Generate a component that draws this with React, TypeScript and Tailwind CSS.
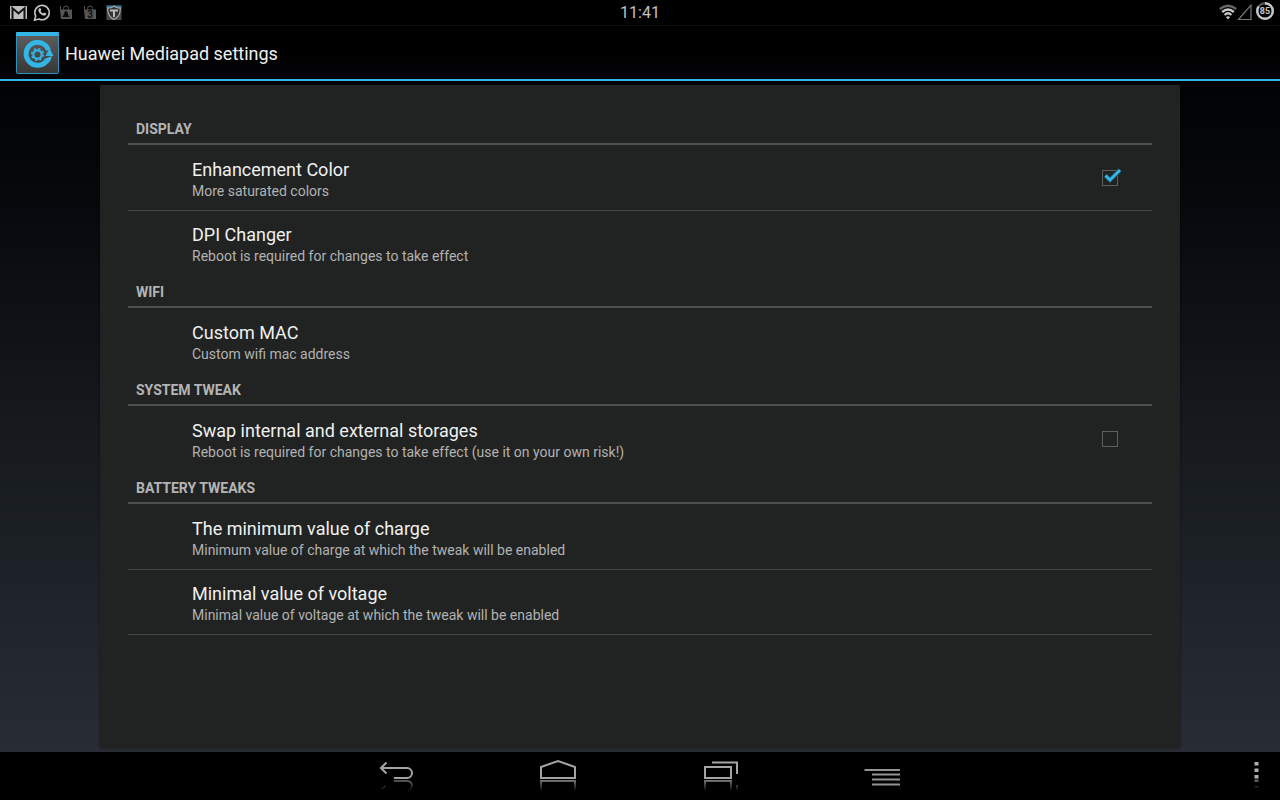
import { useState } from "react";

type Item = {
  title: string;
  summary: string;
  toggle?: "color" | "storage";
};

const sections: { name: string; items: Item[] }[] = [
  {
    name: "DISPLAY",
    items: [
      { title: "Enhancement Color", summary: "More saturated colors", toggle: "color" },
      { title: "DPI Changer", summary: "Reboot is required for changes to take effect" },
    ],
  },
  {
    name: "WIFI",
    items: [{ title: "Custom MAC", summary: "Custom wifi mac address" }],
  },
  {
    name: "SYSTEM TWEAK",
    items: [
      {
        title: "Swap internal and external storages",
        summary: "Reboot is required for changes to take effect (use it on your own risk!)",
        toggle: "storage",
      },
    ],
  },
  {
    name: "BATTERY TWEAKS",
    items: [
      {
        title: "The minimum value of charge",
        summary: "Minimum value of charge at which the tweak will be enabled",
      },
      {
        title: "Minimal value of voltage",
        summary: "Minimal value of voltage at which the tweak will be enabled",
      },
    ],
  },
];

function StatusBar() {
  return (
    <div className="grid h-[25px] grid-cols-3 items-center bg-black">
      <div className="flex items-center pb-[2px] pl-[6px]">
        {/* gmail */}
        <svg className="h-6 w-6" viewBox="0 0 24 24">
          <rect x="4" y="6" width="17" height="13" fill="#bdbdbd" />
          <path d="M6.500 19V8l6 5.500L18.500 8v11" fill="none" stroke="#111" strokeWidth="2" />
          <path d="M6 6.500h13l-6.500 5z" fill="#bdbdbd" />
        </svg>
        {/* whatsapp */}
        <svg className="h-6 w-6" viewBox="0 0 24 24">
          <path d="M4.500 20.200l1.200-4.200A7.200 7.200 0 1 1 8.800 19z" fill="none" stroke="#c4c4c4" strokeWidth="1.600" />
          <path d="M9 8.500c.8-.9 1.400-.7 1.700 0l.6 1.400-.8 1.100c.6 1.200 1.500 2 2.700 2.500l1-1.100 2 1c.2 1.200-.9 2.200-2.100 2.200-2.800 0-6-3.300-5.700-5.800z" fill="#c4c4c4" />
        </svg>
        {/* store updates */}
        <svg className="h-6 w-6" viewBox="0 0 24 24">
          <path d="M6.500 10V6M9.500 9.500V8.500a2.500 2.500 0 0 1 5 0v1" fill="none" stroke="#555" />
          <path d="M6 9.500h12V19H7z" fill="#565656" />
          <path d="M8 17c2-1 2-6 4-6s2 5 4 6z" fill="#0c0c0c" />
        </svg>
        <svg className="h-6 w-6" viewBox="0 0 24 24">
          <path d="M6.500 10V6M9.500 9.500V8.500a2.500 2.500 0 0 1 5 0v1" fill="none" stroke="#555" />
          <path d="M6 9.500h12V19H7z" fill="#565656" />
          <text x="12" y="18" textAnchor="middle" fontSize="10" fontWeight="700" fill="#0c0c0c">3</text>
        </svg>
        {/* titanium shield */}
        <svg className="h-6 w-6" viewBox="0 0 24 24">
          <rect x="4.500" y="5.500" width="15" height="14.500" fill="#434b50" />
          <rect x="4.500" y="5.500" width="15" height="3" fill="#2f7895" />
          <path d="M5.700 8.200q3.500 0 6.300-2 2.800 2 6.300 2 .3 8-6.300 11.300Q5.400 16 5.700 8.200z" fill="#333" stroke="#aaa" strokeWidth="1.200" />
          <path d="M8 10.500h8M12 10.500v6.500" stroke="#bbb" strokeWidth="2" />
        </svg>
      </div>
      <time className="text-center text-base leading-6 text-[#c0c0c0]">11:41</time>
      <div className="flex items-center justify-end pr-[5px] pb-[2px]">
        <svg className="h-6 w-[18px]" viewBox="0 0 18 24">
          <g fill="none" strokeWidth="2.400">
            <path d="M.8 9Q9 2.500 17.200 9" stroke="#666" />
            <path d="M3.200 12Q9 7 14.800 12" stroke="#c8c8c8" />
            <path d="M5.600 15Q9 11.700 12.400 15" stroke="#c8c8c8" />
          </g>
          <path d="M7 17.200Q9 15.200 11 17.200L9 19.500z" fill="#c8c8c8" />
        </svg>
        <svg className="h-6 w-[18px]" viewBox="0 0 18 24">
          <path d="M1.500 19.500H14V5z" fill="none" stroke="#777" strokeWidth="1.200" />
        </svg>
        <svg className="h-6 w-5" viewBox="0 0 20 24">
          <circle cx="10" cy="11" r="7.800" fill="none" stroke="#555" strokeWidth="2.400" />
          <circle
            cx="10"
            cy="11"
            r="7.800"
            fill="none"
            stroke="#c6c6c6"
            strokeWidth="2.400"
            pathLength="100"
            strokeDasharray="85 15"
            transform="rotate(-90 10 11)"
          />
          <text x="10" y="14" textAnchor="middle" fontSize="9" fontWeight="700" fill="#c6c6c6">85</text>
        </svg>
      </div>
    </div>
  );
}

function AppIcon() {
  return (
    <svg className="h-[42px] w-[43px]" viewBox="0 0 43 42">
      <defs>
        <linearGradient id="tile" x1="0" y1="0" x2="0" y2="1">
          <stop offset="0" stopColor="#606060" />
          <stop offset="1" stopColor="#363636" />
        </linearGradient>
      </defs>
      <rect x=".5" y=".5" width="42" height="41" rx="1" fill="url(#tile)" stroke="#2b93bd" />
      <rect width="43" height="4" rx="1" fill="#33b5e5" />
      {/* ring that ends in an arrow head */}
      <path d="M31 28.500A11.500 11.500 0 1 1 32.500 18" fill="none" stroke="#33b5e5" strokeWidth="5" />
      <path d="M28 27l4.500 4A14 14 0 0 0 36 24z" fill="#33b5e5" />
      <path d="M33.500 16l4 8h-8z" fill="#33b5e5" />
      <circle cx="21.500" cy="22.500" r="4.200" fill="none" stroke="#33b5e5" strokeWidth="2.200" />
      <circle cx="21.500" cy="22.500" r="5.800" fill="none" stroke="#33b5e5" strokeWidth="1.600" strokeDasharray="2.300 2.255" />
    </svg>
  );
}

function Row({ item, checked, onToggle }: { item: Item; checked: boolean; onToggle: () => void }) {
  const text = (
    <span className="flex flex-1 flex-col">
      <span className="text-lg leading-6 text-[#f0f0f0]">{item.title}</span>
      <span className="text-sm leading-[18px] text-[#b2b2b2]">{item.summary}</span>
    </span>
  );

  if (!item.toggle) {
    return (
      <button type="button" className="flex h-16 w-full items-start pt-3 pr-[34px] pl-16 text-left">
        {text}
      </button>
    );
  }

  return (
    <label className="flex h-16 w-full items-start pt-3 pr-[34px] pl-16">
      {text}
      <span className="relative mt-3 h-4 w-4">
        <input
          type="checkbox"
          checked={checked}
          onChange={onToggle}
          className="block h-4 w-4 appearance-none border border-[#5e5e60]"
        />
        {checked && (
          <svg className="pointer-events-none absolute -top-1 left-0 h-5 w-5" viewBox="0 0 20 20">
            <path d="M3.500 9.500l4.500 4.500L18 4" fill="none" stroke="#1f4454" strokeWidth="5" />
            <path d="M3.500 9.500l4.500 4.500L18 4" fill="none" stroke="#33b5e5" strokeWidth="3" />
          </svg>
        )}
      </span>
    </label>
  );
}

const navClass = "flex h-12 w-[162px] justify-center";

function NavBar() {
  return (
    <nav className="grid h-12 grid-cols-[1fr_auto_1fr] bg-black">
      <span />
      <div className="flex">
        <button type="button" aria-label="Back" className={navClass}>
          <svg className="h-12 w-10" viewBox="0 0 40 48">
            <defs>
              <linearGradient id="fade" x1="0" y1="28" x2="0" y2="39" gradientUnits="userSpaceOnUse">
                <stop offset="0" stopColor="#777" />
                <stop offset="1" stopColor="#000" />
              </linearGradient>
            </defs>
            <path d="M9.500 10.500L4 16l5.500 5.500M4 16h26a5 5 0 0 1 0 10H17" fill="none" stroke="#a4a4a4" strokeWidth="2" />
            <path d="M17 29h13q5 0 5 5.500-1 3-4 4M4 38l4.500-4" fill="none" stroke="url(#fade)" strokeWidth="1.500" />
          </svg>
        </button>
        <button type="button" aria-label="Home" className={navClass}>
          <svg className="h-12 w-10" viewBox="0 0 40 48">
            <path d="M2 26V15l17-6 17 6v11z" fill="none" stroke="#a4a4a4" strokeWidth="2" />
            <path d="M2 39V29h34v10" fill="none" stroke="url(#fade)" strokeWidth="2" />
          </svg>
        </button>
        <button type="button" aria-label="Recent apps" className={navClass}>
          <svg className="h-12 w-10" viewBox="0 0 40 48">
            <path d="M4 15h26v11H4zM11 10.500h25V22" fill="none" stroke="#a4a4a4" strokeWidth="2" />
            <path d="M4 39V29h26v10M36 33v6" fill="none" stroke="url(#fade)" strokeWidth="2" />
          </svg>
        </button>
        <button type="button" aria-label="Menu" className={navClass}>
          <svg className="h-12 w-10" viewBox="0 0 40 48">
            <path d="M1.500 18H37M9 22.500h28M9 27.500h28M9 32.500h28" stroke="#939393" strokeWidth="2.200" />
          </svg>
        </button>
      </div>
      <button type="button" aria-label="More options" className="flex w-12 justify-center justify-self-end">
        <svg className="h-12 w-4" viewBox="0 0 16 48">
          <path d="M6.500 10h4v3.500h-4zM6.500 16.500h4V20h-4zM6.500 23h4v3.500h-4z" fill="#b0b0b0" />
          <path d="M6.500 27.500h4V30h-4z" fill="#5c5c5c" />
          <path d="M6.500 34h4v1.500h-4z" fill="#292929" />
        </svg>
      </button>
    </nav>
  );
}

export default function App() {
  const [values, setValues] = useState({ color: true, storage: false });

  return (
    <div className="flex min-h-screen flex-col bg-black font-['Roboto',sans-serif]">
      <StatusBar />
      <header className="flex h-14 items-center gap-[6px] border-t border-b-2 border-t-[#0d0d0d] border-b-[#33b5e5] bg-linear-to-b from-black to-[#040508] pt-px pl-4">
        <AppIcon />
        <h1 className="pt-[2px] text-lg leading-6 text-[#f0f0f0]">Huawei Mediapad settings</h1>
      </header>

      <div className="flex flex-1 flex-col bg-linear-to-b from-[#020305] via-[#15191d] via-50% to-[#282d35] px-[100px] pt-1 pb-1">
        <main className="flex-1 rounded-b-xs bg-[#212322] px-7 pt-7 pb-16 shadow-[0_0_3px_#00000080]">
          {sections.map((section) => (
            <section key={section.name}>
              <h2 className="mb-px h-8 border-b-2 border-[#4d4e4e] pt-[6px] pl-2 text-sm leading-5 font-bold text-[#b4b4b4]">
                {section.name}
              </h2>
              {section.items.map((item, i) => {
                const key = item.toggle;
                const last = i === section.items.length - 1 && section.name !== "BATTERY TWEAKS";
                return (
                  <div
                    key={item.title}
                    className={last ? "border-b border-transparent" : "border-b border-[#424343]"}
                  >
                    <Row
                      item={item}
                      checked={key ? values[key] : false}
                      onToggle={() => key && setValues({ ...values, [key]: !values[key] })}
                    />
                  </div>
                );
              })}
            </section>
          ))}
        </main>
      </div>
      <NavBar />
    </div>
  );
}
